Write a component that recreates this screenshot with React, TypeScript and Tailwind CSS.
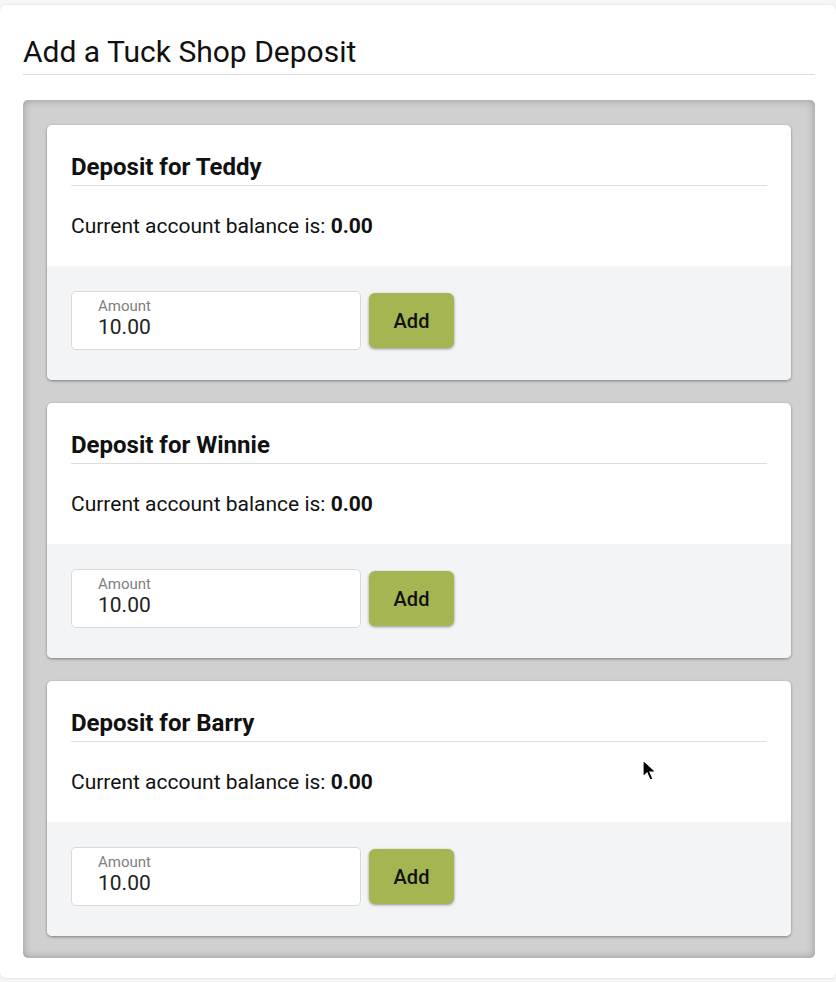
const kids = ["Teddy", "Winnie", "Barry"];

function DepositCard({ name }: { name: string }) {
  return (
    <div className="overflow-hidden rounded-[5px] bg-white shadow-[0_1px_3px_rgba(0,0,0,0.4)]">
      <div className="px-6 pt-[27px]">
        <h3 className="border-b border-[#dedede] pb-[3px] text-[24px] font-bold leading-[30px] text-[#111]">Deposit for {name}</h3>
        <p className="pt-[27px] pb-[26px] text-[21px] leading-[27px] text-[#111]">
          Current account balance is: <b>0.00</b>
        </p>
      </div>
      <div className="flex items-center gap-2 bg-[#f3f4f5] px-6 pt-[25px] pb-[30px]">
        <div className="h-[59px] w-[290px] rounded-[5px] border border-[#d9d9d9] bg-white pl-[26px] pt-[6px]">
          <p className="text-[15px] leading-[17px] text-[#808080]">Amount</p>
          <p className="text-[21px] leading-[25px] text-[#222]">10.00</p>
        </div>
        <button className="h-[55px] w-[85px] rounded-[6px] bg-[#a5b552] text-[20px] font-medium text-[#111] shadow-[0_1px_3px_rgba(0,0,0,0.4)]">
          Add
        </button>
      </div>
    </div>
  );
}

export default function App() {
  return (
    <div className="min-h-[982px] bg-[#f6f6f6] pt-[5px] font-['Roboto',sans-serif]">
      <div className="relative h-[973px] w-[836px] rounded-[6px] bg-white pl-[23px] pr-[21px] pt-[29px] shadow-[0_0_3px_rgba(0,0,0,0.12)]">
        <h1 className="border-b border-[#dcdcdc] pb-[4px] text-[30px] leading-[36px] text-[#111]">Add a Tuck Shop Deposit</h1>
        <div className="mt-[25px] flex flex-col gap-[23px] rounded-[5px] bg-[#cfd0cf] px-[24px] pt-[25px] pb-[22px] shadow-[inset_0_0_8px_rgba(0,0,0,0.28)]">
          {kids.map((k) => (
            <DepositCard key={k} name={k} />
          ))}
        </div>
        <svg className="absolute left-[642px] top-[754px]" width="16" height="24" viewBox="0 0 16 24">
          <path d="M1 1 L1 18 L5 14 L8 21 L11 20 L8 13 L14 13 Z" fill="#000" stroke="#fff" strokeWidth="1.2" />
        </svg>
      </div>
    </div>
  );
}
